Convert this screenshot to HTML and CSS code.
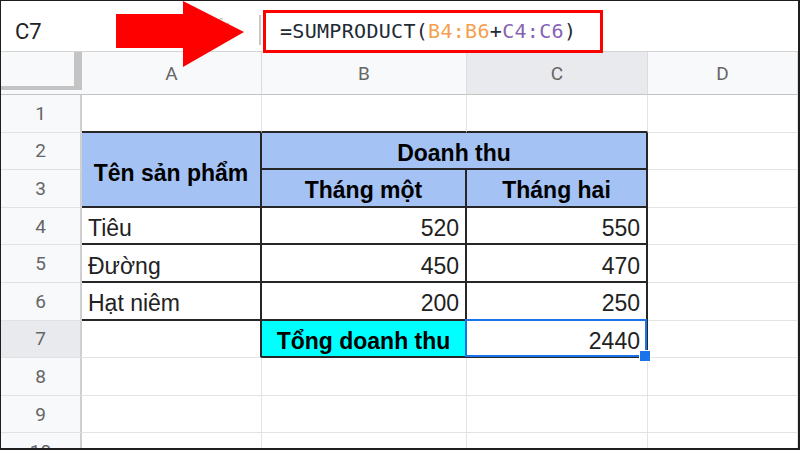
FILE: index.html
```html
<!DOCTYPE html>
<html lang="vi">
<head>
    <meta charset="UTF-8">
    <title>SUMPRODUCT - Tổng doanh thu</title>
    <link rel="stylesheet" href="styles.css">
</head>
<body>

<div class="frame">
    <div class="toolbar">
        <div class="namebox">C7</div>
        <div class="fx"><i>fx</i></div>
        <div class="formula">=SUMPRODUCT(<span class="ref-b">B4:B6</span>+<span class="ref-c">C4:C6</span>)</div>
    </div>

    <div class="sheet">
        <div class="corner"><div class="freeze"></div></div>
        <div class="colhead">A</div>
        <div class="colhead">B</div>
        <div class="colhead active">C</div>
        <div class="colhead">D</div>

        <div class="rowhead">1</div>
        <div class="cell top"></div>
        <div class="cell top"></div>
        <div class="cell top"></div>
        <div class="cell"></div>

        <div class="rowhead">2</div>
        <div class="cell box head merge-rows">Tên sản phẩm</div>
        <div class="cell box head merge-cols">Doanh thu</div>
        <div class="cell"></div>

        <div class="rowhead">3</div>
        <div class="cell box head">Tháng một</div>
        <div class="cell box head">Tháng hai</div>
        <div class="cell"></div>

        <div class="rowhead">4</div>
        <div class="cell box">Tiêu</div>
        <div class="cell box num">520</div>
        <div class="cell box num">550</div>
        <div class="cell"></div>

        <div class="rowhead">5</div>
        <div class="cell box">Đường</div>
        <div class="cell box num">450</div>
        <div class="cell box num">470</div>
        <div class="cell"></div>

        <div class="rowhead">6</div>
        <div class="cell box">Hạt niêm</div>
        <div class="cell box num">200</div>
        <div class="cell box num">250</div>
        <div class="cell"></div>

        <div class="rowhead active">7</div>
        <div class="cell edge"></div>
        <div class="cell box total">Tổng doanh thu</div>
        <div class="cell box num selected">2440<span class="handle"></span></div>
        <div class="cell"></div>

        <div class="rowhead">8</div>
        <div class="cell"></div>
        <div class="cell"></div>
        <div class="cell"></div>
        <div class="cell"></div>

        <div class="rowhead">9</div>
        <div class="cell"></div>
        <div class="cell"></div>
        <div class="cell"></div>
        <div class="cell"></div>

        <div class="rowhead">10</div>
        <div class="cell"></div>
        <div class="cell"></div>
        <div class="cell"></div>
        <div class="cell"></div>
    </div>

    <!-- red pointer over the formula bar -->
    <svg class="arrow" width="130" height="70" viewBox="0 0 130 70">
        <polygon points="0,13 67,13 67,0 128,31 67,66 67,47 0,47" fill="#ff0000"/>
    </svg>
</div>

</body>
</html>
```

FILE: styles.css
```css
body {
    margin: 0;
    background: #fff;
}
.frame {
    position: relative;
    width: 800px;
    height: 450px;
    box-sizing: border-box;
    border-style: solid;
    border-color: #1e1e1e;
    border-width: 1px 2px 2px 1px;
    overflow: hidden;
    background: #fff;
}

/* name box + formula bar */
.toolbar {
    display: flex;
    align-items: flex-start;
    height: 50px;
    border-bottom: 1px solid #d4d4d4;
}
.namebox {
    width: 200px;
    padding: 6px 0 0 14px;
    box-sizing: border-box;
    font-family: Roboto, "Liberation Sans", sans-serif;
    font-size: 22px;
    line-height: 50px;
    color: #202124;
}
.fx {
    width: 60px;
    height: 30px;
    margin-top: 14px;
    box-sizing: border-box;
    padding-left: 14px;
    border-right: 2px solid #c8c8c8;
    font-family: "Liberation Serif", serif;
    font-size: 20px;
    line-height: 22px;
    color: #c2c2c2;
}
.formula {
    position: relative;
    z-index: 1;
    width: 340px;
    height: 43px;
    margin: 9px 0 0 2px;
    box-sizing: border-box;
    border: 3px solid #ff0000;
    padding-left: 14px;
    background: #fff;
    font-family: "DejaVu Sans Mono", monospace;
    font-size: 20px;
    letter-spacing: 0.3px;
    line-height: 37px;
    color: #222a35;
}
.ref-b {
    color: #f5a04e;
}
.ref-c {
    color: #8663b4;
}

.arrow {
    position: absolute;
    left: 115px;
    top: 0;
}

/* grid */
.sheet {
    display: grid;
    grid-template-columns: 81px 180px 205px 181px 1fr;
    grid-template-rows: 43px repeat(10, 37.6px);
}
.corner {
    background: #f8f9fa;
    padding-bottom: 4px;
    border-bottom: 1px solid #c4c4c4;
}
.freeze {
    height: 100%;
    box-sizing: border-box;
    border-right: 8px solid #c4c4c4;
    border-bottom: 4px solid #c4c4c4;
}
.colhead, .rowhead {
    display: flex;
    align-items: center;
    justify-content: center;
    background: #f8f9fa;
    font-family: Roboto, "Liberation Sans", sans-serif;
    font-size: 19px;
    color: #666;
}
.colhead {
    border-right: 1px solid #dcdcdc;
    border-bottom: 1px solid #c4c4c4;
}
.rowhead {
    border-right: 2px solid #cfcfcf;
    border-bottom: 1px solid #e2e2e2;
}
.colhead.active, .rowhead.active {
    background: #e8eaed;
}

.cell {
    display: flex;
    align-items: flex-end;
    padding: 0 6px 2px;
    border-right: 1px solid #e2e3e3;
    border-bottom: 1px solid #e2e3e3;
    font-family: "Liberation Sans", Arial, sans-serif;
    font-size: 23px;
    line-height: 1.15;
    color: #222;
    white-space: nowrap;
}
.cell.top {
    border-bottom: 2px solid #262626;
}
.cell.edge {
    border-right: 2px solid #262626;
}
.cell.box {
    border-right: 2px solid #262626;
    border-bottom: 2px solid #262626;
}
.cell.head {
    background: #a4c2f4;
    justify-content: center;
    font-weight: bold;
    color: #000;
}
.merge-rows {
    grid-row: span 2;
    align-items: center;
    padding-top: 10px;
}
.merge-cols {
    grid-column: span 2;
}
.cell.num {
    justify-content: flex-end;
}
.cell.total {
    background: #00ffff;
    justify-content: center;
    font-weight: bold;
    color: #000;
}

/* active cell outline and fill handle */
.selected {
    position: relative;
}
.selected::after {
    content: "";
    position: absolute;
    left: -2px;
    top: -2px;
    right: -1px;
    bottom: -1px;
    border: 2px solid #1a73e8;
}
.handle {
    position: absolute;
    right: -5px;
    bottom: -6px;
    z-index: 1;
    width: 10px;
    height: 10px;
    background: #1a73e8;
    border: 1px solid #fff;
}
```
